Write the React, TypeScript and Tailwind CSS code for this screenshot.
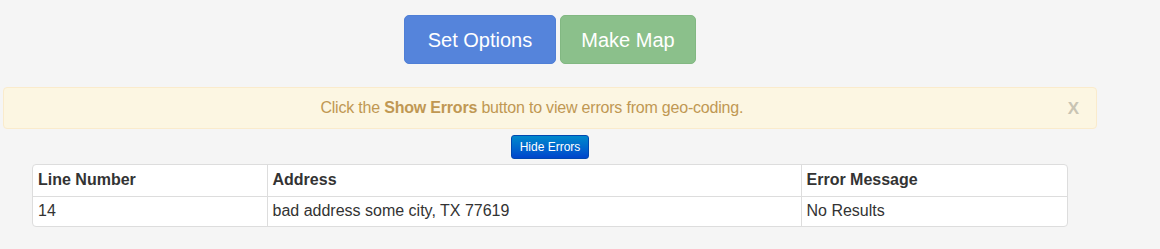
import React from "react";

const rows = [
    { line: "14", address: "bad address some city, TX 77619", error: "No Results" },
];

const App: React.FC = () => {
    return (
        <div className="min-h-[249px] bg-[#f5f5f5] pt-[15px] font-['Liberation_Sans',Arial,sans-serif] text-[#333]">
            <div className="ml-[3px] w-[1094px]">
                <div className="flex justify-center gap-[4px]">
                    <button className="h-[49px] w-[152px] rounded-[5px] border border-[#4f7fd6] bg-[#5584db] text-[20px] text-white">
                        Set Options
                    </button>
                    <button className="h-[49px] w-[136px] rounded-[5px] border border-[#82b882] bg-[#8bc08b] text-[20px] text-white">
                        Make Map
                    </button>
                </div>

                <div className="mt-[23px] flex h-[42px] items-center rounded-[4px] border border-[#faebcc] bg-[#fcf6e2] pl-[15px] pr-[15px] text-[16px] text-[#c09853]">
                    <div className="flex-1 pl-[1px] pr-[24px] text-center tracking-[-0.2px]">
                        Click the <b>Show Errors</b> button to view errors from geo-coding.
                    </div>
                    <span className="mr-[2px] text-[17px] font-bold leading-none text-[#c9c4b3]">X</span>
                </div>

                <div className="mt-[6px] flex justify-center">
                    <button className="h-[24px] w-[78px] rounded-[3px] border border-[#0048b0] bg-gradient-to-b from-[#0088cc] to-[#0044cc] text-[12px] text-white">
                        Hide Errors
                    </button>
                </div>

                <div className="ml-[29px] mt-[5px] w-[1036px] overflow-hidden rounded-[4px] border border-[#ddd] bg-white text-[16px]">
                    <table className="w-full border-collapse">
                        <thead>
                            <tr className="h-[31px] border-b border-[#ddd] text-left">
                                <th className="w-[234px] px-[5px] font-bold">Line Number</th>
                                <th className="w-[534px] border-l border-[#ddd] px-[5px] font-bold">Address</th>
                                <th className="border-l border-[#ddd] px-[5px] font-bold">Error Message</th>
                            </tr>
                        </thead>
                        <tbody>
                            {rows.map((r) => (
                                <tr key={r.line} className="h-[30px]">
                                    <td className="px-[5px]">{r.line}</td>
                                    <td className="border-l border-[#ddd] px-[5px]">{r.address}</td>
                                    <td className="border-l border-[#ddd] px-[5px]">{r.error}</td>
                                </tr>
                            ))}
                        </tbody>
                    </table>
                </div>
            </div>
        </div>
    );
};

export default App;
